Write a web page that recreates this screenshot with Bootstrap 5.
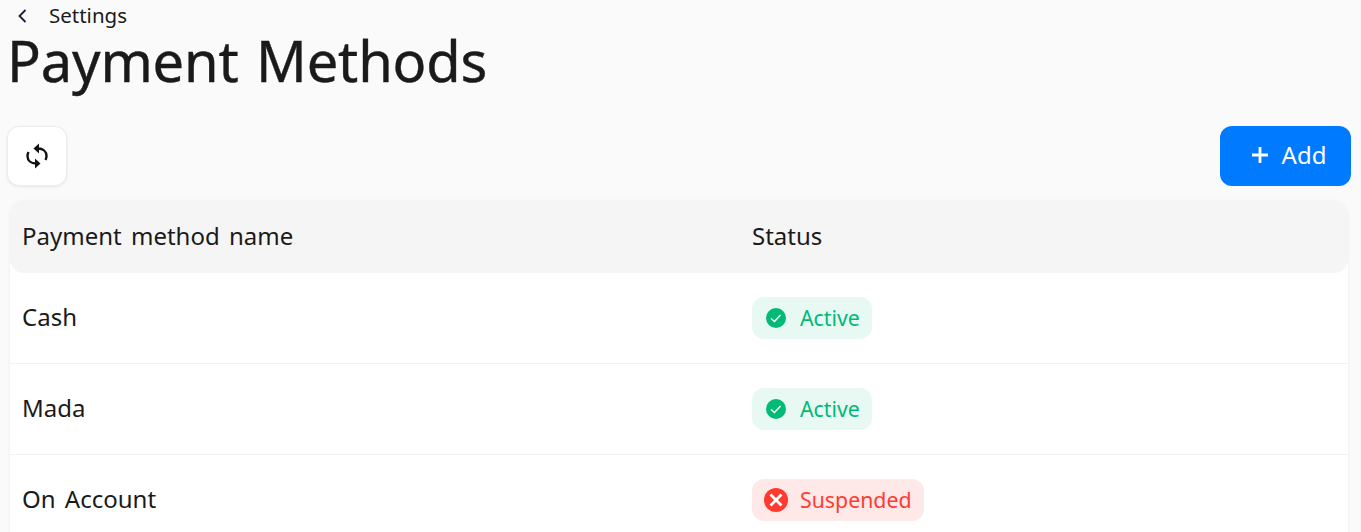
<!DOCTYPE html>
<html lang="en">
<head>
  <meta charset="UTF-8">
  <title>Payment Methods</title>
  <link href="https://cdn.jsdelivr.net/npm/bootstrap@5.3.0/dist/css/bootstrap.min.css" rel="stylesheet">
  <style>
    html, body { height: 532px; overflow: hidden; }
    body {
      background: #fafafa;
      color: #1a1a1a;
      font-family: "Noto Sans", sans-serif;
    }
    .page-wrap { padding: 0 10px 0 7px; }
    .back-row { height: 32px; padding-left: 8px; gap: 20px; font-size: 20.5px; }
    .back-row span { padding-bottom: 2px; }
    .page-title { font-size: 56px; line-height: 56px; font-weight: 400; margin: 0 0 38px; word-spacing: 3px; letter-spacing: -.15px; -webkit-text-stroke: .4px #1a1a1a; }
    .toolbar { height: 60px; margin-bottom: 14px; }
    .refresh-btn {
      width: 60px; height: 60px; padding: 0;
      background: #fff; border: 1px solid #ececec; border-radius: 12px;
      box-shadow: 0 1px 3px rgba(0,0,0,.08);
    }
    .add-btn {
      width: 131px; height: 60px; padding: 0 0 2px 7px; gap: 14px;
      background: #007aff; color: #fff; border: 0; border-radius: 12px;
      font-size: 24px;
    }
    .pm-table {
      margin: 0 3px; background: #fff; border-radius: 14px 14px 0 0;
      box-shadow: 0 1px 3px rgba(0,0,0,.07);
      font-size: 24px; word-spacing: 3px;
    }
    .pm-head { height: 73px; background: #f5f5f5; border-radius: 14px; }
    .pm-row { height: 91px; border-bottom: 1px solid #f2f2f2; }
    .name-col { width: 742px; padding: 0 0 2px 12px; flex: none; }
    .status-label { padding-bottom: 2px; }
    .state-pill {
      height: 42px; padding: 0 12px; gap: 12px; border-radius: 12px; font-size: 21.3px;
    }
    .state-pill span { padding-bottom: 1px; }
    .state-ok { background: #e8f8f3; color: #00ba76; }
    .state-off { background: #ffe9e8; color: #ff3b30; }
  </style>
</head>
<body>
  <div class="page-wrap">
    <div class="back-row d-flex align-items-center">
      <svg width="14" height="16" viewBox="0 0 14 16" fill="none" stroke="#1a1a3a" stroke-width="1.8"><path d="M10.500 2 4.500 8l6 6"/></svg>
      <span>Settings</span>
    </div>
    <h1 class="page-title">Payment Methods</h1>
    <div class="toolbar d-flex justify-content-between">
      <button class="refresh-btn btn d-flex align-items-center justify-content-center">
        <svg width="24" height="28" viewBox="0 0 24 28" fill="none" stroke="#111" stroke-width="2.4">
          <path d="M13 6.500c5 0 8.500 3 8.500 7.500 0 1.500-.4 2.800-1 4"/>
          <path d="M11 21.500c-5 0-8.500-3-8.500-7.500 0-1.500.4-2.800 1-4"/>
          <path d="M14 1.500 8.500 6.500l5.500 5z" fill="#111" stroke="none"/>
          <path d="M10 26.500l5.500-5-5.500-5z" fill="#111" stroke="none"/>
        </svg>
      </button>
      <button class="add-btn btn d-flex align-items-center justify-content-center">
        <svg width="16" height="16" viewBox="0 0 16 16" stroke="#fff" stroke-width="2.8"><path d="M8 0v16M0 8h16"/></svg>
        <span>Add</span>
      </button>
    </div>
    <div class="pm-table">
      <div class="pm-head d-flex align-items-center">
        <div class="name-col">Payment method name</div>
        <div class="status-label">Status</div>
      </div>
      <div class="pm-row d-flex align-items-center">
        <div class="name-col">Cash</div>
        <div class="state-pill state-ok d-flex align-items-center">
          <svg width="24" height="24" viewBox="0 0 24 24"><circle cx="12" cy="12" r="10" fill="#00ba76"/><path d="M7 12.500l3.500 3 6-6.500" fill="none" stroke="#fff" stroke-width="1.5"/></svg>
          <span>Active</span>
        </div>
      </div>
      <div class="pm-row d-flex align-items-center">
        <div class="name-col">Mada</div>
        <div class="state-pill state-ok d-flex align-items-center">
          <svg width="24" height="24" viewBox="0 0 24 24"><circle cx="12" cy="12" r="10" fill="#00ba76"/><path d="M7 12.500l3.500 3 6-6.500" fill="none" stroke="#fff" stroke-width="1.5"/></svg>
          <span>Active</span>
        </div>
      </div>
      <div class="pm-row d-flex align-items-center">
        <div class="name-col">On Account</div>
        <div class="state-pill state-off d-flex align-items-center">
          <svg width="24" height="24" viewBox="0 0 24 24"><circle cx="12" cy="12" r="12" fill="#ff3b30"/><path d="M6.500 6.500l11 11M17.500 6.500l-11 11" fill="none" stroke="#fff" stroke-width="2.800"/></svg>
          <span>Suspended</span>
        </div>
      </div>
    </div>
  </div>
</body>
</html>
